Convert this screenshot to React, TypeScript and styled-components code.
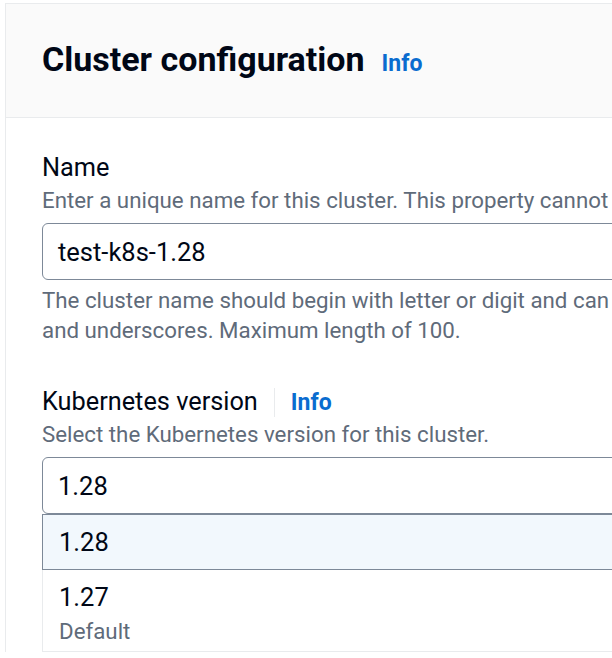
import React from 'react'
import styled, {createGlobalStyle} from 'styled-components'

const GlobalStyle = createGlobalStyle`
  html, body {
    margin: 0;
    padding: 0;
    background: #fff;
    overflow: hidden;
  }
  body {
    font-family: Roboto, "Open Sans", sans-serif;
    color: #000716;
  }
`

const Page = styled.div`
  padding: 3px 0 0 5px;
  width: 1300px;
`

const Container = styled.section`
  border-top: 1px solid #e9ebed;
  border-left: 1px solid #e9ebed;
  background: #fff;
`

const Header = styled.header`
  height: 114px;
  box-sizing: border-box;
  background: #fafafa;
  border-bottom: 1px solid #e9ebed;
  padding: 35px 0 0 36px;
  display: flex;
  align-items: baseline;
  gap: 17px;
`

const Title = styled.h2`
  margin: 0;
  font-size: 34px;
  line-height: 40px;
  font-weight: 700;
  color: #000716;
`

const InfoLink = styled.a`
  font-size: 23px;
  font-weight: 700;
  color: #0a6ccf;
  text-decoration: none;
`

const Body = styled.div`
  padding: 34px 0 0 36px;
`

const Field = styled.div`
  width: 1200px;
  & + & {
    margin-top: 41px;
  }
`

const LabelRow = styled.div`
  display: flex;
  align-items: center;
  height: 32px;
`

const Label = styled.label`
  font-size: 25.3px;
  line-height: 32px;
  color: #000716;
`

const Divider = styled.span`
  width: 1px;
  height: 29px;
  background: #e9ebed;
  margin: 0 16px;
`

const Description = styled.div`
  font-size: 22.3px;
  line-height: 28px;
  color: #5f6b7a;
  margin-top: 2px;
`

const Control = styled.div`
  margin-top: 9px;
  height: 57px;
  box-sizing: border-box;
  border: 1px solid #7d8998;
  border-radius: 6px;
  padding: 0 15px;
  display: flex;
  align-items: center;
  font-size: 25.5px;
  color: #000716;
`

const Hint = styled.div`
  margin-top: 5px;
  font-size: 22.3px;
  line-height: 30px;
  color: #5f6b7a;
`

const Dropdown = styled.ul`
  list-style: none;
  margin: 0;
  padding: 0;
  border-left: 1px solid #e9ebed;
  background: #fff;
`

const Option = styled.li<{highlighted?: boolean}>`
  box-sizing: border-box;
  margin-left: -1px;
  padding: 0 16px;
  border-left: 1px solid ${p => (p.highlighted ? '#7d8998' : '#e9ebed')};
  border-top: 1px solid ${p => (p.highlighted ? '#7d8998' : 'transparent')};
  border-bottom: 1px solid ${p => (p.highlighted ? '#7d8998' : '#e9ebed')};
  background: ${p => (p.highlighted ? '#f2f8fd' : '#fff')};
  display: flex;
  flex-direction: column;
  justify-content: center;
  min-height: 56px;
  & + & {
    border-top: none;
    padding-top: 11px;
    padding-bottom: 5px;
  }
`

const OptionLabel = styled.span`
  font-size: 25.5px;
  line-height: 32px;
  color: #000716;
`

const OptionTag = styled.span`
  margin-top: 3px;
  font-size: 22.3px;
  line-height: 30px;
  color: #5f6b7a;
`

const versions = [
  {value: '1.28', highlighted: true},
  {value: '1.27', tag: 'Default'},
]

export default function App() {
  return (
    <>
      <GlobalStyle />
      <Page>
        <Container>
          <Header>
            <Title>Cluster configuration</Title>
            <InfoLink href='#'>Info</InfoLink>
          </Header>
          <Body>
            <Field>
              <LabelRow>
                <Label>Name</Label>
              </LabelRow>
              <Description>Enter a unique name for this cluster. This property cannot</Description>
              <Control>test-k8s-1.28</Control>
              <Hint>
                The cluster name should begin with letter or digit and can
                <br />
                and underscores. Maximum length of 100.
              </Hint>
            </Field>
            <Field>
              <LabelRow>
                <Label>Kubernetes version</Label>
                <Divider />
                <InfoLink href='#'>Info</InfoLink>
              </LabelRow>
              <Description>Select the Kubernetes version for this cluster.</Description>
              <Control>1.28</Control>
              <Dropdown>
                {versions.map(v => (
                  <Option key={v.value} highlighted={v.highlighted}>
                    <OptionLabel>{v.value}</OptionLabel>
                    {v.tag && <OptionTag>{v.tag}</OptionTag>}
                  </Option>
                ))}
              </Dropdown>
            </Field>
          </Body>
        </Container>
      </Page>
    </>
  )
}
